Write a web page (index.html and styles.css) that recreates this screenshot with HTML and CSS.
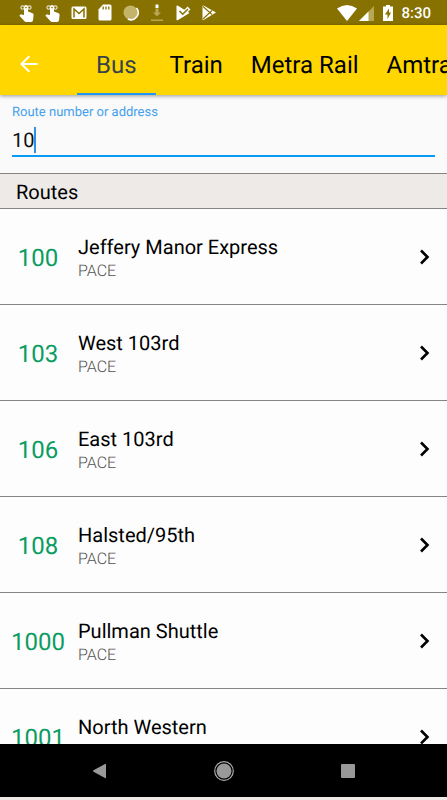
FILE: index.html
```html
<!DOCTYPE html>
<html lang="en">
<head>
<meta charset="utf-8">
<meta name="viewport" content="width=device-width, initial-scale=1">
<title>Routes</title>
<link rel="stylesheet" href="styles.css">
</head>
<body>
<svg class="defs" aria-hidden="true">
  <symbol id="touch" viewBox="0 0 16 20">
    <circle cx="3.600" cy="4.600" r="1.700" fill="none" stroke="#e7e2cc" stroke-width="1.100"/>
    <circle cx="10.400" cy="4.600" r="1.700" fill="none" stroke="#e7e2cc" stroke-width="1.100"/>
    <path fill="#fff" d="M5 4a2 2 0 0 1 4 0v4.500l4.600 1.800q1.200.6 1 2l-.6 5q-.3 1.700-1.800 1.700H7.200q-.8 0-1.400-.6L.4 12.800l.8-1.100q.5-.5 1.200-.3l2.600.7z"/>
    <circle cx="7" cy="4.600" r=".8" fill="#877100"/>
  </symbol>
  <symbol id="chevron" viewBox="0 0 12 18">
    <path d="M2 2.500 8.500 9 2 15.500" fill="none" stroke="#000" stroke-width="2.600"/>
  </symbol>
</svg>
<div class="screen">
  <div class="status">
    <div class="notices">
      <svg width="16" height="20"><use href="#touch"/></svg>
      <svg width="16" height="20"><use href="#touch"/></svg>
      <svg width="16" height="20" viewBox="0 0 16 20"><rect x=".5" y="3.500" width="15" height="12.500" rx="1.500" fill="#fff"/><path d="M3 14.500V6l5 4.500L13 6v8.500" fill="none" stroke="#877100" stroke-width="1.500"/></svg>
      <svg width="16" height="20" viewBox="0 0 16 20"><path d="M6 1.500h7q1.500 0 1.500 1.500v13q0 1.500-1.500 1.500H3q-1.500 0-1.500-1.500V6.500z" fill="#fff"/><path d="M6.200 3.500v3M9 3.500v3M11.800 3.500v3" stroke="#877100" stroke-width="1.300"/></svg>
      <svg width="16" height="20" viewBox="0 0 16 20"><circle cx="7.500" cy="9.500" r="7" fill="#c3b46a"/><path d="M13.500 5A7.200 7.200 0 0 1 4.800 16" fill="none" stroke="#fff" stroke-width="1.600"/></svg>
      <svg width="16" height="20" viewBox="0 0 16 20"><path d="M6.500 1.500h3V5h-3z" fill="#fff"/><path d="M6.500 5.500h3v4H12L8 13.500l-4-4h2.500zM2 16.500h12V18H2z" fill="#b7a755"/></svg>
      <svg width="16" height="20" viewBox="0 0 16 20"><path d="M1.500 3.500q0-1.500 1.500-.8L14.500 10 3 17q-1.500.8-1.500-.5z" fill="#fff"/><path d="m4.500 8.500 3 3L14 5" fill="none" stroke="#fff" stroke-width="4"/><path d="m4.500 8 3.200 3.200L13 6" fill="none" stroke="#877100" stroke-width="1.600"/></svg>
      <svg width="16" height="20" viewBox="0 0 16 20"><path d="M1.500 3.500q0-1.500 1.500-.8L15 9.500 3 16.800q-1.500.8-1.500-.5z" fill="#fff"/><path d="m2 3.500 9 8M2 16l9-8.500" stroke="#877100" stroke-width="1.100"/></svg>
    </div>
    <div class="system">
      <svg width="20" height="18" viewBox="0 0 20 18"><path d="M0 4.500Q10-2.500 20 4.500L10 17z" fill="#fff"/></svg>
      <svg width="18" height="18" viewBox="0 0 18 18"><path d="M17 2v15H2z" fill="#b7a755"/><path d="M11.500 7.500V17H2z" fill="#fff"/></svg>
      <svg class="battery" width="10" height="18" viewBox="0 0 10 18"><path d="M3 1h4v1.500h3V17H0V2.500h3z" fill="#fff"/><path d="M6 4.500v4h2L4.500 15v-4.500H2z" fill="#877100"/></svg>
      <time>8:30</time>
    </div>
  </div>
  <header class="appbar">
    <button class="back" aria-label="Back"><svg width="18" height="18" viewBox="0 0 18 18"><path d="M17.500 9H2M9.300 1.200 1.500 9l7.800 7.800" fill="none" stroke="#fff" stroke-width="2"/></svg></button>
    <nav class="tabs">
      <a class="tab active" href="#bus">Bus</a>
      <a class="tab" href="#train">Train</a>
      <a class="tab" href="#metra">Metra Rail</a>
      <a class="tab" href="#amtrak">Amtrak</a>
    </nav>
  </header>
  <main class="content">
    <form class="search">
      <label for="route">Route number or address</label>
      <div class="field"><input id="route" type="text" value="10" autocomplete="off"><span class="caret"></span></div>
    </form>
    <h2>Routes</h2>
    <ul class="routes">
      <li><a href="#100"><span class="number">100</span><span class="info"><span class="name">Jeffery Manor Express</span><span class="agency">PACE</span></span><svg width="12" height="18"><use href="#chevron"/></svg></a></li>
      <li><a href="#103"><span class="number">103</span><span class="info"><span class="name">West 103rd</span><span class="agency">PACE</span></span><svg width="12" height="18"><use href="#chevron"/></svg></a></li>
      <li><a href="#106"><span class="number">106</span><span class="info"><span class="name">East 103rd</span><span class="agency">PACE</span></span><svg width="12" height="18"><use href="#chevron"/></svg></a></li>
      <li><a href="#108"><span class="number">108</span><span class="info"><span class="name">Halsted/95th</span><span class="agency">PACE</span></span><svg width="12" height="18"><use href="#chevron"/></svg></a></li>
      <li><a href="#1000"><span class="number">1000</span><span class="info"><span class="name">Pullman Shuttle</span><span class="agency">PACE</span></span><svg width="12" height="18"><use href="#chevron"/></svg></a></li>
      <li><a href="#1001"><span class="number">1001</span><span class="info"><span class="name">North Western</span><span class="agency">PACE</span></span><svg width="12" height="18"><use href="#chevron"/></svg></a></li>
    </ul>
  </main>
  <footer class="navbar">
    <button aria-label="Back"><svg width="22" height="22" viewBox="0 0 22 22"><path d="M17 4.500v13q0 1-1 .5L4.500 11.700q-1-.7 0-1.400L16 4q1-.5 1 .5z" fill="#999"/></svg></button>
    <button aria-label="Home"><svg width="22" height="22" viewBox="0 0 22 22"><circle cx="11" cy="11" r="9.300" fill="none" stroke="#aaa" stroke-width="1.200"/><circle cx="11" cy="11" r="7.500" fill="#999"/></svg></button>
    <button aria-label="Recent apps"><svg width="22" height="22" viewBox="0 0 22 22"><rect x="4" y="4" width="14" height="14" rx="1" fill="#999"/></svg></button>
  </footer>
</div>
</body>
</html>
```

FILE: styles.css
```css
* {
  box-sizing: border-box;
}

body {
  margin: 0;
  font-family: Roboto, "Liberation Sans", sans-serif;
  text-rendering: geometricPrecision;
  color: #000;
  background: #eeeae8;
}

button {
  padding: 0;
  border: 0;
  background: none;
}

a {
  color: inherit;
  text-decoration: none;
}

svg {
  display: block;
  flex: none;
}

.defs {
  position: absolute;
  width: 0;
  height: 0;
}

.screen {
  display: flex;
  flex-direction: column;
  height: 100vh;
  padding-bottom: 3px;
  overflow: hidden;
}

.status {
  display: flex;
  flex: none;
  justify-content: space-between;
  align-items: center;
  height: 25px;
  padding: 0 16px 0 19px;
  background: #877100;
}

.notices {
  display: flex;
  gap: 10px;
}

.system {
  display: flex;
  align-items: center;
}

.battery {
  margin: 0 8px;
}

time {
  color: #fff;
  font-size: 15px;
  font-weight: 500;
  line-height: 24px;
}

.appbar {
  display: flex;
  flex: none;
  height: 70px;
  padding-left: 20px;
  background: #ffd600;
  box-shadow: 0 1px 4px rgba(0, 0, 0, 0.4);
  z-index: 1;
}

.back {
  padding-top: 8px;
}

.tabs {
  display: flex;
  flex: 1;
  min-width: 0;
  padding-left: 39px;
  overflow: hidden;
}

.tab {
  flex: none;
  padding: 24px 14px 0;
  border-bottom: 2px solid transparent;
  font-size: 24px;
  line-height: 32px;
}

.tab.active {
  padding: 24px 19px 0;
  border-color: #2196f3;
  color: #37434b;
}

.content {
  flex: 1;
  min-height: 0;
  overflow: hidden;
  background: #fafafa;
}

.search {
  padding: 8px 12px 16px;
}

.search label {
  display: block;
  color: #45a0ec;
  font-size: 13px;
  line-height: 20px;
}

.field {
  display: flex;
  align-items: center;
  height: 34px;
  padding-top: 2px;
  border-bottom: 2px solid #0a9af5;
}

input {
  field-sizing: content;
  padding: 0;
  border: 0;
  outline: 0;
  background: none;
  font: 20px/26px Roboto, "Liberation Sans", sans-serif;
  text-rendering: geometricPrecision;
  color: #111;
}

.caret {
  width: 2px;
  height: 26px;
  background: #2f91e6;
}

h2 {
  margin: 0;
  padding: 2px 16px 0;
  border-top: 1px solid #858585;
  border-bottom: 1px solid #858585;
  background: #eeeae8;
  font-size: 20px;
  font-weight: 400;
  line-height: 32px;
}

.routes {
  margin: 0;
  padding: 0;
  list-style: none;
  background: #fdfdfd;
}

.routes a {
  display: flex;
  align-items: center;
  height: 96px;
  padding-right: 16px;
  border-bottom: 1px solid #858585;
}

.number {
  flex: none;
  width: 76px;
  padding-top: 2px;
  color: #0a9c61;
  font-size: 24px;
  line-height: 32px;
  text-align: center;
}

.info {
  flex: 1;
  padding-top: 2px;
  padding-left: 2px;
}

.name,
.agency {
  display: block;
}

.name {
  font-size: 20px;
  line-height: 26px;
}

.agency {
  color: #505050;
  font-size: 16px;
  font-weight: 300;
  line-height: 22px;
}

.navbar {
  display: flex;
  flex: none;
  justify-content: center;
  align-items: center;
  gap: 102px;
  height: 53px;
  background: #000;
}
```
